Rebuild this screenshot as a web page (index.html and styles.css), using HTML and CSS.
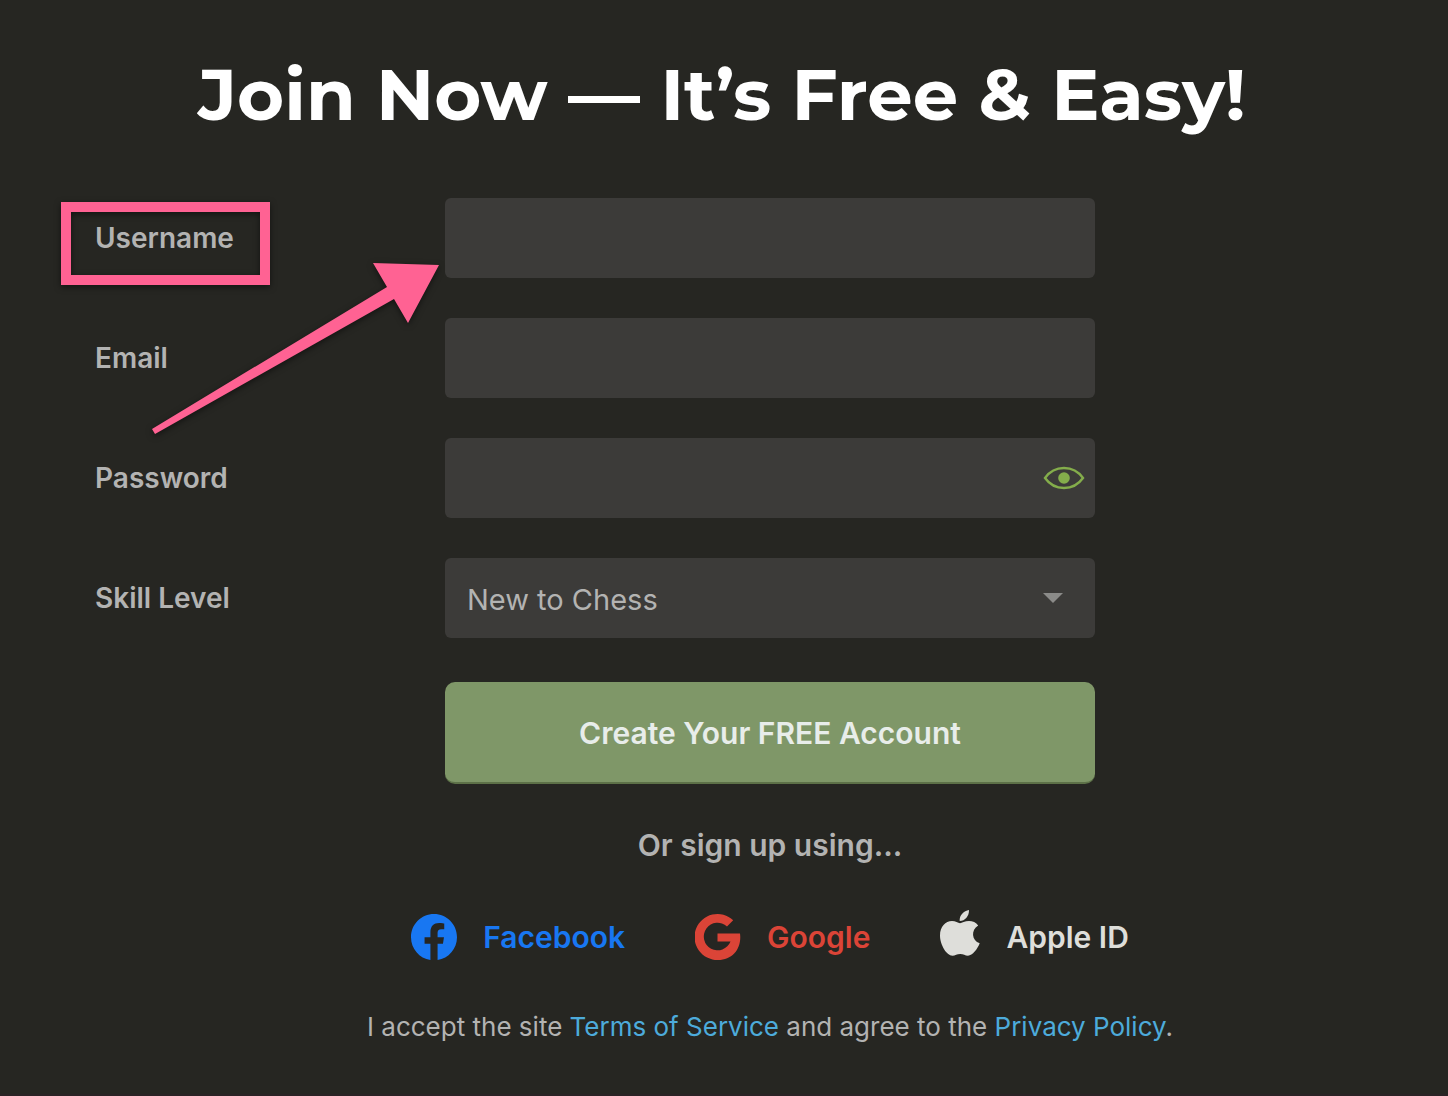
FILE: index.html
```html
<!DOCTYPE html>
<html lang="en">
<head>
    <meta charset="UTF-8">
    <meta name="viewport" content="width=device-width, initial-scale=1.0">
    <title>Join Now</title>
    <link rel="stylesheet" href="styles.css">
</head>
<body>
    <main class="signup">
        <h1>Join Now — It’s Free &amp; Easy!</h1>

        <form class="signup-form">
            <div class="row">
                <label for="username">Username</label>
                <input type="text" id="username" name="username">
            </div>
            <div class="row">
                <label for="email">Email</label>
                <input type="email" id="email" name="email">
            </div>
            <div class="row">
                <label for="password">Password</label>
                <div class="field">
                    <input type="password" id="password" name="password">
                    <button type="button" class="show-password" aria-label="Show password">
                        <svg width="42" height="24" viewBox="0 0 42 24">
                            <path d="M2 12C7 5 14 2 21 2s14 3 19 10c-5 7-12 10-19 10S7 19 2 12z" fill="none" stroke="#84ad4b" stroke-width="2.4"/>
                            <circle cx="21" cy="12" r="5.8" fill="#84ad4b"/>
                        </svg>
                    </button>
                </div>
            </div>
            <div class="row">
                <label for="skill">Skill Level</label>
                <div class="field">
                    <select id="skill" name="skill">
                        <option>New to Chess</option>
                        <option>Beginner</option>
                        <option>Intermediate</option>
                        <option>Advanced</option>
                    </select>
                    <span class="caret"></span>
                </div>
            </div>
            <div class="row">
                <button type="submit" class="create">Create Your FREE Account</button>
            </div>
        </form>

        <section class="other">
            <p class="or">Or sign up using...</p>
            <div class="social">
                <a href="#" class="facebook">
                    <svg width="46" height="46" viewBox="0 0 24 24" fill="currentColor">
                        <path d="M24 12.07C24 5.4 18.63 0 12 0S0 5.4 0 12.07C0 18.1 4.39 23.1 10.13 24v-8.44H7.08v-3.49h3.05V9.41c0-3.02 1.79-4.69 4.53-4.69 1.31 0 2.68.24 2.68.24v2.97h-1.51c-1.49 0-1.96.93-1.96 1.89v2.25h3.33l-.53 3.49h-2.8V24C19.61 23.1 24 18.1 24 12.07z"/>
                    </svg>
                    Facebook
                </a>
                <a href="#" class="google">
                    <svg width="46" height="46" viewBox="0 0 46 46" fill="currentColor">
                        <path d="M22.500 19.500H45C47 34 38 46 23 46A23 23 0 1 1 38.200 6.200L32 12.400A13.800 13.800 0 1 0 35.500 27.500H22.500z"/>
                    </svg>
                    Google
                </a>
                <a href="#" class="apple">
                    <svg width="40" height="54" viewBox="0 0 40 54" fill="currentColor">
                        <path d="M29 0c.3 6-4 11-9.300 11C19 5.500 24 .6 29 0z"/>
                        <path d="M20 13.200c2 0 4.800-2.200 9-2.200 3.500 0 7.200 1.500 9.200 4.400-7.600 4.600-6.500 14.900 1.500 17.900C37.500 39 32.500 45.700 28 45.700c-3 0-4.500-1.700-7.800-1.700s-5 1.700-7.700 1.700C6.500 45.700 0 34.500 0 25.500 0 16.500 5.500 11 12 11c3.500 0 6 2.200 8 2.200z"/>
                    </svg>
                    Apple ID
                </a>
            </div>
            <p class="terms">I accept the site <a href="#">Terms of Service</a> and agree to the <a href="#">Privacy Policy</a>.</p>
        </section>

        <!-- Tutorial marks over the form -->
        <div class="highlight"></div>
        <svg class="arrow" width="290" height="174" viewBox="0 0 290 174" fill="#ff6293">
            <path d="M2 167L237 25 223 1 289 3 258 61 244 37 5 172z"/>
        </svg>
    </main>
</body>
</html>
```

FILE: styles.css
```css
* {
    box-sizing: border-box;
}

body {
    margin: 0;
    background-color: #262622;
    color: #b3b3b2;
    font-family: Inter, sans-serif;
}

.signup {
    position: relative;
    min-height: 100vh;
    padding-top: 46px;
    border-bottom: 2px solid #2a2325;
}

h1 {
    margin: 0 0 56px;
    padding-right: 4px;
    color: #ffffff;
    font-family: Montserrat, Inter, sans-serif;
    font-size: 72px;
    font-weight: 700;
    line-height: 96px;
    text-align: center;
}

.signup-form {
    display: flex;
    flex-direction: column;
    gap: 40px;
    padding: 0 353px 0 95px;
}

.row {
    display: grid;
    grid-template-columns: 7fr 13fr;
    align-items: center;
}

label {
    font-size: 28px;
    font-weight: 600;
}

.field {
    position: relative;
}

input,
select {
    display: block;
    width: 100%;
    height: 80px;
    padding: 2px 22px 0;
    border: none;
    border-radius: 6px;
    background-color: #3c3b39;
    color: #b3b3b2;
    font-family: inherit;
    font-size: 29px;
    appearance: none;
}

.show-password {
    position: absolute;
    top: 28px;
    right: 10px;
    padding: 0;
    border: none;
    background: none;
    cursor: pointer;
}

.show-password svg {
    display: block;
}

.caret {
    position: absolute;
    top: 35px;
    right: 32px;
    border: 10px solid transparent;
    border-top-color: #8b8b89;
    border-bottom: none;
    pointer-events: none;
}

.create {
    grid-column: 2;
    height: 102px;
    margin-top: 4px;
    padding-top: 3px;
    border: none;
    border-bottom: 2px solid #5d7148;
    border-radius: 10px;
    background-color: #7f9768;
    color: #e8edea;
    font-family: inherit;
    font-size: 30px;
    font-weight: 600;
    cursor: pointer;
}

.other {
    padding-left: 92px;
    text-align: center;
}

.or {
    margin: 41px 0 0;
    font-size: 30px;
    font-weight: 600;
    line-height: 40px;
}

.social {
    display: flex;
    justify-content: center;
    gap: 70px;
    margin-top: 45px;
}

.social a {
    display: flex;
    align-items: center;
    gap: 26px;
    font-size: 30px;
    font-weight: 600;
    text-decoration: none;
}

.facebook {
    color: #1877f2;
}

.google {
    color: #db4437;
}

.apple {
    color: #dededa;
}

.terms {
    margin: 43px 0 0;
    font-size: 26px;
    line-height: 40px;
}

.terms a {
    color: #4dabdb;
    text-decoration: none;
}

.highlight {
    position: absolute;
    top: 202px;
    left: 61px;
    width: 209px;
    height: 83px;
    border: 10px solid #ff6293;
    filter: drop-shadow(0 2px 3px rgba(0, 0, 0, 0.5));
}

.arrow {
    position: absolute;
    top: 262px;
    left: 150px;
    filter: drop-shadow(0 2px 3px rgba(0, 0, 0, 0.5));
}
```
